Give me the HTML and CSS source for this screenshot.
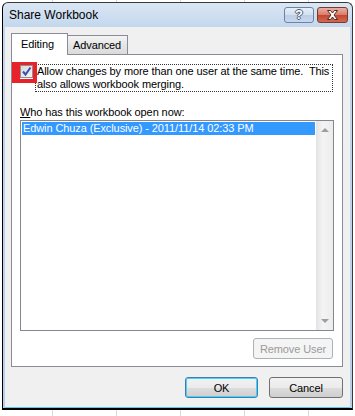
FILE: index.html
```html
<!DOCTYPE html>
<html>
<head>
  <title>Share Workbook</title>
  <link rel="stylesheet" href="styles.css">
</head>
<body>
  <div class="window">
    <div class="titlebar">
      <span class="title">Share Workbook</span>
      <div class="caption-buttons">
        <div class="cap-btn help">?</div>
        <div class="cap-btn close">
          <svg width="13" height="10" viewBox="0 0 13 10">
            <path d="M1.5 0.5 H4.5 L6.5 3 L8.5 0.5 H11.5 L8 5 L11.5 9.5 H8.5 L6.5 7 L4.5 9.5 H1.5 L5 5 Z" fill="#fff" stroke="#4e2a24" stroke-width="1" stroke-linejoin="round"/>
          </svg>
        </div>
      </div>
    </div>

    <div class="client">
      <div class="tabs">
        <div class="tab active">Editing</div>
        <div class="tab">Advanced</div>
      </div>

      <div class="panel">
        <div class="check-row">
          <div class="check-wrap">
            <div class="checkbox">
              <svg width="11" height="11" viewBox="0 0 11 11">
                <path d="M2 5.5 L4.5 8.5 L9.5 1.5" fill="none" stroke="#3a4fae" stroke-width="2"/>
              </svg>
            </div>
            <div class="mark"></div>
          </div>
          <div class="check-label">Allow changes by more than one user at the same time.&nbsp; This<br>also allows workbook merging.</div>
        </div>

        <div class="list-label"><u>W</u>ho has this workbook open now:</div>
        <div class="listbox">
          <div class="items">
            <div class="item selected">Edwin Chuza (Exclusive) - 2011/11/14 02:33 PM</div>
          </div>
          <div class="scrollbar">
            <span class="arrow up"></span>
            <span class="arrow down"></span>
          </div>
        </div>

        <div class="panel-actions">
          <button class="btn remove" disabled>Remove User</button>
        </div>
      </div>

      <div class="dialog-buttons">
        <button class="btn default ok">OK</button>
        <button class="btn cancel">Cancel</button>
      </div>
    </div>
  </div>
</body>
</html>
```

FILE: styles.css
```css
body {
  margin: 0;
  height: 416px;
  overflow: hidden;
  background-color: #fff;
  background-image: linear-gradient(to right, transparent 52px, #d9d9d9 52px, #d9d9d9 53px, transparent 53px);
  background-size: 64px 100%;
  font-family: "Liberation Sans", Arial, sans-serif;
  font-size: 11px;
  letter-spacing: -0.1px;
  color: #000;
}
.window {
  box-sizing: border-box;
  width: 351px;
  height: 408px;
  margin: 2px 0 0 2px;
  border: 1px solid #3a3a3a;
  border-left-color: #000;
  border-bottom: 2px solid #000;
  border-radius: 6px 6px 0 0;
  padding: 0 2px;
  background: linear-gradient(#dae6f3, #c2d6ed 26px, #b9cfe8);
  display: flex;
  flex-direction: column;
}
.titlebar {
  height: 24px;
  display: flex;
  justify-content: space-between;
  align-items: flex-start;
  padding: 0 2px 0 4px;
}
.title {
  font-size: 12px;
  line-height: 24px;
  letter-spacing: 0;
  color: #000;
}
.caption-buttons {
  display: flex;
  gap: 3px;
  margin-top: 4px;
}
.cap-btn {
  box-sizing: border-box;
  width: 30px;
  height: 16px;
  border: 1px solid #6b84a3;
  border-radius: 3px;
  display: flex;
  align-items: center;
  justify-content: center;
}
.help {
  background: linear-gradient(#e6eef8, #d3e0ef 50%, #bccfe6 51%, #c8d9ee);
  color: #fff;
  font-weight: bold;
  font-size: 13px;
  line-height: 14px;
  text-shadow: 1px 0 0 #4a5b72, -1px 0 0 #4a5b72, 0 1px 0 #4a5b72, 0 -1px 0 #4a5b72;
}
.close {
  width: 31px;
  border-color: #773a30;
  background: linear-gradient(#eab0a4, #d97a66 50%, #c4462f 51%, #d26a50);
}
.client {
  flex: 1;
  background: #f0f0f0;
  border-bottom: 1px solid #5cc6ee;
  padding: 6px 7px 0 6px;
  display: flex;
  flex-direction: column;
}
.tabs {
  display: flex;
  align-items: flex-end;
  height: 21px;
}
.tab {
  box-sizing: border-box;
  height: 19px;
  padding: 0 6px 0 5px;
  line-height: 18px;
  border: 1px solid #898c95;
  border-bottom: none;
  border-left: none;
  background: linear-gradient(#f4f4f4, #e6e6e6 50%, #dadada);
}
.tab.active {
  position: relative;
  z-index: 1;
  width: 57px;
  height: 22px;
  margin-bottom: -1px;
  padding-left: 9px;
  line-height: 21px;
  border-left: 1px solid #898c95;
  background: #fff;
}
.panel {
  box-sizing: border-box;
  width: 332px;
  height: 313px;
  border: 1px solid #898c95;
  background: #fff;
  padding: 9px 8px 7px 8px;
  display: flex;
  flex-direction: column;
}
.check-row {
  display: flex;
  align-items: flex-start;
}
.check-wrap {
  position: relative;
  margin-top: 1px;
}
.checkbox {
  box-sizing: border-box;
  width: 13px;
  height: 13px;
  border: 1px solid #8e8f8f;
  background: linear-gradient(135deg, #d8d8d8, #f6f6f6);
}
.checkbox svg {
  display: block;
}
.mark {
  position: absolute;
  left: -8px;
  top: -3px;
  box-sizing: border-box;
  width: 25px;
  height: 21px;
  border-style: solid;
  border-color: #e8222a;
  border-width: 3px 4px 4px 8px;
}
.check-label {
  box-sizing: border-box;
  width: 298px;
  margin-left: 2px;
  padding: 0 1px;
  border: 1px dotted #333;
  line-height: 13px;
  white-space: nowrap;
}
.list-label {
  margin-top: 14px;
  line-height: 13px;
}
.listbox {
  box-sizing: border-box;
  width: 314px;
  height: 211px;
  margin-top: 1px;
  border: 1px solid #828790;
  display: flex;
}
.items {
  flex: 1;
  padding: 1px;
}
.item {
  height: 13px;
  line-height: 13px;
  padding-left: 1px;
  white-space: nowrap;
}
.item.selected {
  background: #3399ff;
  color: #fff;
}
.scrollbar {
  width: 17px;
  background: linear-gradient(to right, #e3e3e3, #f4f4f4 40%, #ececec);
  display: flex;
  flex-direction: column;
  justify-content: space-between;
  align-items: center;
  padding: 7px 0;
  box-sizing: border-box;
}
.arrow {
  width: 0;
  height: 0;
  border-left: 4px solid transparent;
  border-right: 4px solid transparent;
}
.arrow.up {
  border-bottom: 4px solid #9e9e9e;
}
.arrow.down {
  border-top: 4px solid #9e9e9e;
}
.panel-actions {
  display: flex;
  justify-content: flex-end;
  margin-top: 7px;
  padding-right: 1px;
}
.btn {
  box-sizing: border-box;
  height: 21px;
  padding: 0;
  border: 1px solid #707070;
  border-radius: 3px;
  background: linear-gradient(#f2f2f2, #ebebeb 50%, #dddddd 51%, #cfcfcf);
  font-family: "Liberation Sans", Arial, sans-serif;
  font-size: 11px;
  letter-spacing: -0.1px;
  color: #000;
}
.btn.remove {
  width: 80px;
  border-color: #adb2b5;
  background: #f4f4f4;
  color: #9a9a9a;
}
.dialog-buttons {
  display: flex;
  justify-content: flex-end;
  gap: 11px;
  margin-top: 10px;
}
.btn.ok {
  width: 73px;
}
.btn.cancel {
  width: 74px;
}
.btn.default {
  border-color: #3c7fb1;
  box-shadow: inset 0 0 0 1px #48d1f7;
}
```
